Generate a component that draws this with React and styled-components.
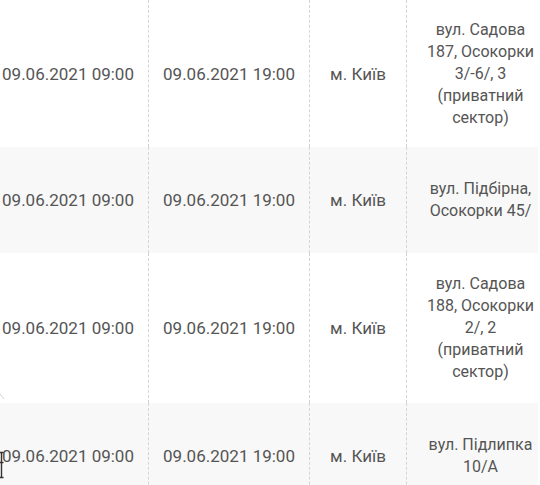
import React from 'react';
import styled, { createGlobalStyle } from 'styled-components';

const rows = [
  { start: '09.06.2021 09:00', end: '09.06.2021 19:00', city: 'м. Київ', address: 'вул. Садова 187, Осокорки 3/-6/, 3 (приватний сектор)', height: 147 },
  { start: '09.06.2021 09:00', end: '09.06.2021 19:00', city: 'м. Київ', address: 'вул. Підбірна, Осокорки 45/', height: 106 },
  { start: '09.06.2021 09:00', end: '09.06.2021 19:00', city: 'м. Київ', address: 'вул. Садова 188, Осокорки 2/, 2 (приватний сектор)', height: 150 },
  { start: '09.06.2021 09:00', end: '09.06.2021 19:00', city: 'м. Київ', address: 'вул. Підлипка 10/А', height: 106 },
];

const App = () => {
  return (
    <Wrapper>
      <GlobalStyle />
      <Table>
        {rows.map((row, index) => (
          <Row key={index} $striped={index % 2 === 1} $height={row.height}>
            <Cell $width={161} $nowrap>{row.start}</Cell>
            <Cell $width={161} $nowrap>{row.end}</Cell>
            <Cell $width={97}>{row.city}</Cell>
            <AddressCell $width={150} $size={16} $last>{row.address}</AddressCell>
          </Row>
        ))}
      </Table>
      {/* bits of the mouse cursor caught at the left edge */}
      <Cursor width="8" height="90" viewBox="0 0 8 90">
        <line x1="0" y1="4" x2="4" y2="9" stroke="#d0d0d0" strokeWidth="1" />
        <path d="M0 62.5h3.5M1.5 62v26M0 72.5h3.5M0 87.5h3.5" stroke="#333" strokeWidth="1.4" fill="none" />
      </Cursor>
    </Wrapper>
  );
};

const GlobalStyle = createGlobalStyle`
  body, html {
    margin: 0;
    padding: 0;
    background: #ffffff;
    overflow: hidden;
  }
`

const Wrapper = styled.div`
  position: relative;
  width: 538px;
  height: 485px;
  overflow: hidden;
  background-color: #ffffff;
`

const Table = styled.div`
  margin-left: -12px;
  display: flex;
  flex-direction: column;
  width: 569px;
`

const Row = styled.div`
  display: flex;
  height: ${(p) => p.$height}px;
  flex-shrink: 0;
  background-color: ${(p) => (p.$striped ? '#f8f8f8' : '#ffffff')};
`

const Cell = styled.div`
  box-sizing: border-box;
  width: ${(p) => p.$width}px;
  flex-shrink: 0;
  display: flex;
  align-items: center;
  justify-content: center;
  text-align: center;
  padding: 0 15px;
  white-space: ${(p) => (p.$nowrap ? 'nowrap' : 'normal')};
  font-family: Roboto, 'Liberation Sans', sans-serif;
  font-size: ${(p) => p.$size || 17}px;
  line-height: 22px;
  color: #555555;
  border-right: ${(p) => (p.$last ? 'none' : '1px dashed #d4d4d4')};
`

const AddressCell = styled(Cell)`
  padding: 0 18px 0 15px;
`

const Cursor = styled.svg`
  position: absolute;
  left: 0;
  top: 390px;
  pointer-events: none;
`

export default App;
